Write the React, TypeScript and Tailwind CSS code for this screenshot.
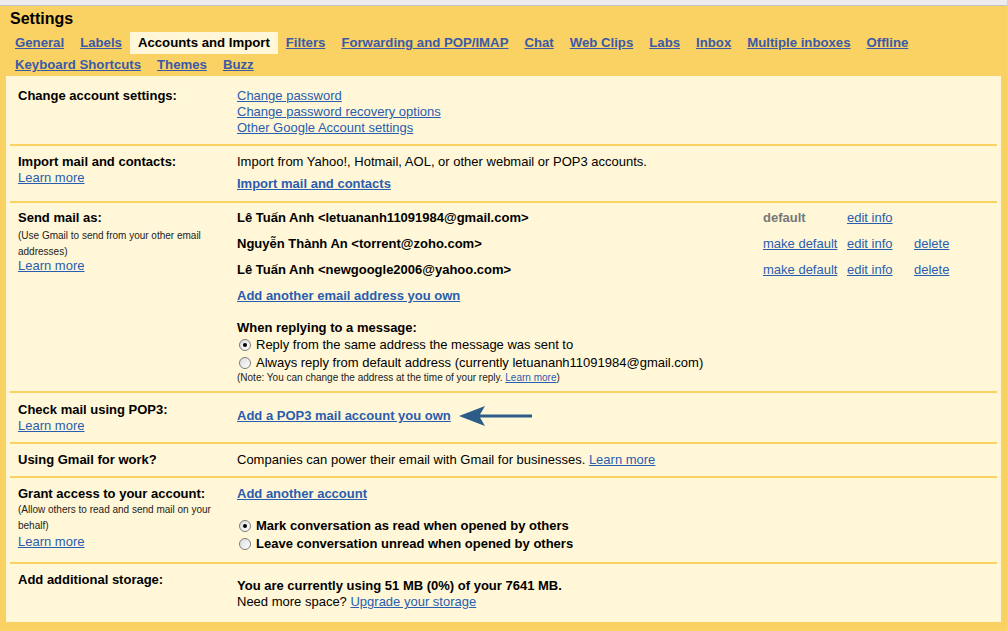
import React from 'react';

const tabsRow1 = ['General', 'Labels', 'Accounts and Import', 'Filters', 'Forwarding and POP/IMAP', 'Chat', 'Web Clips', 'Labs', 'Inbox', 'Multiple inboxes', 'Offline'];
const tabsRow2 = ['Keyboard Shortcuts', 'Themes', 'Buzz'];

const senders = [
  { name: 'Lê Tuấn Anh <letuananh11091984@gmail.com>', isDefault: true },
  { name: 'Nguyễn Thành An <torrent@zoho.com>', isDefault: false },
  { name: 'Lê Tuấn Anh <newgoogle2006@yahoo.com>', isDefault: false },
];

const Tab = ({ label }: { label: string }) => {
  const active = label === 'Accounts and Import';
  return (
    <div className={`h-[22px] px-2 flex items-center font-bold text-[13.2px] ${active ? 'bg-[#fff7d7] text-black' : 'text-[#3a5aa8] underline'}`}>
      {label}
    </div>
  );
};

const A = ({ children, bold }: { children: React.ReactNode; bold?: boolean }) => (
  <a className={`text-[#2a5db0] underline cursor-pointer ${bold ? 'font-bold' : ''}`}>{children}</a>
);

const Radio = ({ checked }: { checked?: boolean }) => (
  <span className="ml-[2px] mr-[5px] w-[12px] h-[12px] rounded-full border border-[#7b7b7b] bg-gradient-to-br from-[#dcdcdc] to-white flex items-center justify-center shrink-0">
    {checked && <span className="w-[4px] h-[4px] rounded-full bg-black" />}
  </span>
);

const Arrow = () => (
  <svg width="74" height="22" viewBox="0 0 74 22" className="ml-2">
    <path d="M0 11 L26 1 L21 9.5 L73 9.5 L73 12.5 L21 12.5 L26 21 Z" fill="#2b5c8a" />
  </svg>
);

const App = () => {
  return (
    <div className="relative w-[1007px] h-[631px] overflow-hidden bg-[#fad163] text-black text-[13px] font-['Liberation_Sans',Arial,sans-serif]">
      <div className="h-[6px] bg-[#ececec] border-b border-[#c4c4c4]" />
      <div className="h-[26px] pl-[10px] flex items-center text-[16px] font-bold">Settings</div>

      {/* tabs */}
      <div className="pl-[7px]">
        <div className="flex">{tabsRow1.map((t) => <Tab key={t} label={t} />)}</div>
        <div className="flex">{tabsRow2.map((t) => <Tab key={t} label={t} />)}</div>
      </div>

      {/* settings panel */}
      <div className="ml-[6px] w-[995px] h-[546px] bg-[#fff7d7] leading-4">
        {/* change account */}
        <div className="mx-1 h-[70px] pl-2 pt-3 flex border-b-2 border-[#fad163]">
          <div className="w-[219px] shrink-0 font-bold">Change account settings:</div>
          <div className="flex flex-col items-start">
            <A>Change password</A>
            <A>Change password recovery options</A>
            <A>Other Google Account settings</A>
          </div>
        </div>

        {/* import */}
        <div className="mx-1 h-[57px] pl-2 pt-2 flex border-b-2 border-[#fad163]">
          <div className="w-[219px] shrink-0 flex flex-col items-start">
            <span className="font-bold">Import mail and contacts:</span>
            <A>Learn more</A>
          </div>
          <div className="flex flex-col">
            <span>Import from Yahoo!, Hotmail, AOL, or other webmail or POP3 accounts.</span>
            <span className="mt-[6px]"><A bold>Import mail and contacts</A></span>
          </div>
        </div>

        {/* send mail as */}
        <div className="mx-1 h-[190px] pl-2 flex border-b-2 border-[#fad163]">
          <div className="w-[219px] shrink-0 pt-[7px] flex flex-col">
            <span className="font-bold">Send mail as:</span>
            <span className="mt-[2px] text-[10px] leading-4 text-[#222]">(Use Gmail to send from your other email addresses)</span>
            <span className="-mt-[2px]"><A>Learn more</A></span>
          </div>
          <div className="flex-1 pt-[2px] flex flex-col">
            {senders.map((s) => (
              <div key={s.name} className="h-[26px] grid grid-cols-[526px_84px_67px_1fr] items-center">
                <span className="font-bold">{s.name}</span>
                {s.isDefault ? <span className="font-bold text-[#777]">default</span> : <span><A>make default</A></span>}
                <span><A>edit info</A></span>
                {s.isDefault ? <span /> : <span><A>delete</A></span>}
              </div>
            ))}
            <div className="h-[26px] flex items-center"><A bold>Add another email address you own</A></div>
            <div className="mt-[11px] font-bold">When replying to a message:</div>
            <div className="h-[18px] flex items-center"><Radio checked />Reply from the same address the message was sent to</div>
            <div className="h-[18px] flex items-center"><Radio />Always reply from default address (currently letuananh11091984@gmail.com)</div>
            <div className="text-[10px] leading-3 text-[#222]">(Note: You can change the address at the time of your reply. <A>Learn more</A>)</div>
          </div>
        </div>

        {/* pop3 */}
        <div className="mx-1 h-[51px] pl-2 flex border-b-2 border-[#fad163]">
          <div className="w-[219px] shrink-0 pt-[9px] flex flex-col items-start">
            <span className="font-bold">Check mail using POP3:</span>
            <A>Learn more</A>
          </div>
          <div className="pt-[12px] flex items-start">
            <span className="mt-[3px]"><A bold>Add a POP3 mail account you own</A></span>
            <Arrow />
          </div>
        </div>

        {/* gmail for work */}
        <div className="mx-1 h-[34px] pl-2 pt-2 flex border-b-2 border-[#fad163]">
          <div className="w-[219px] shrink-0 font-bold">Using Gmail for work?</div>
          <div>Companies can power their email with Gmail for businesses. <A>Learn more</A></div>
        </div>

        {/* grant access */}
        <div className="mx-1 h-[86px] pl-2 pt-2 flex border-b-2 border-[#fad163]">
          <div className="w-[219px] shrink-0 flex flex-col items-start">
            <span className="font-bold">Grant access to your account:</span>
            <span className="text-[10px] leading-4 text-[#222]">(Allow others to read and send mail on your behalf)</span>
            <A>Learn more</A>
          </div>
          <div className="flex flex-col items-start">
            <A bold>Add another account</A>
            <div className="mt-[15px] h-[18px] flex items-center font-bold"><Radio checked />Mark conversation as read when opened by others</div>
            <div className="h-[18px] flex items-center font-bold"><Radio />Leave conversation unread when opened by others</div>
          </div>
        </div>

        {/* storage */}
        <div className="mx-1 h-[58px] pl-2 flex">
          <div className="w-[219px] shrink-0 pt-2 font-bold">Add additional storage:</div>
          <div className="pt-[14px] flex flex-col">
            <span className="font-bold">You are currently using 51 MB (0%) of your 7641 MB.</span>
            <span>Need more space? <A>Upgrade your storage</A></span>
          </div>
        </div>
      </div>
    </div>
  );
};

export default App;
